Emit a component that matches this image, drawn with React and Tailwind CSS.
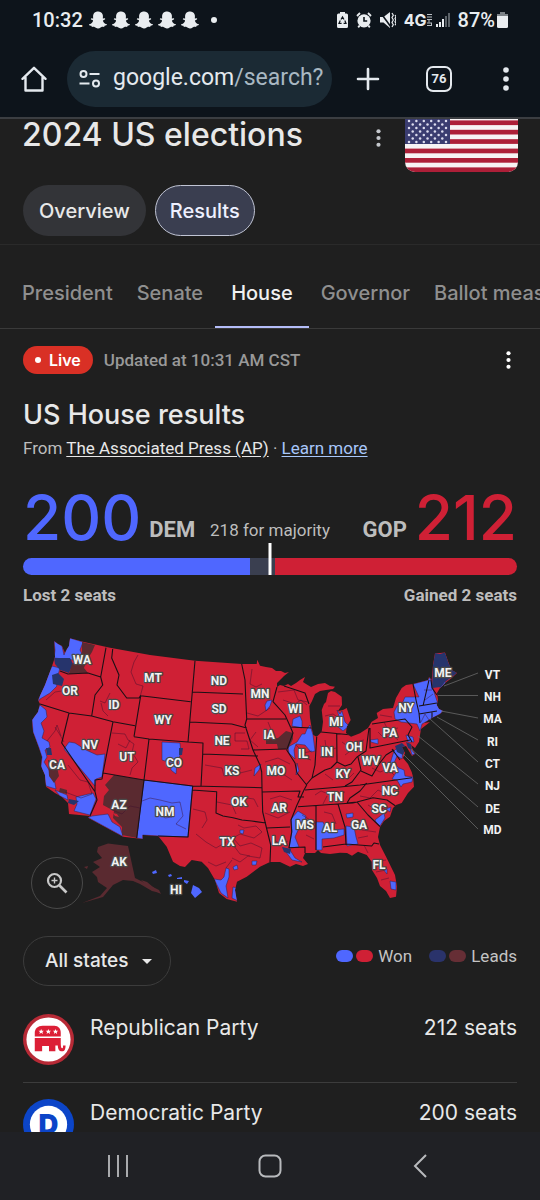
import React from "react";
import { FaSnapchatGhost } from "react-icons/fa";

const RED = "#cf2035";
const BLUE = "#4f67ff";
const NAVY = "#26346c";
const MAROON = "#5a2a30";

function Kebab({ className }) {
  return (
    <svg viewBox="0 0 6 24" className={className} fill="currentColor" aria-hidden="true">
      <circle cx="3" cy="3" r="2.8" />
      <circle cx="3" cy="12" r="2.8" />
      <circle cx="3" cy="21" r="2.8" />
    </svg>
  );
}

function StatusBar() {
  return (
    <div className="flex h-10 items-center justify-between pl-8 pr-8 text-[#e9edf0]">
      <div className="flex items-center gap-[6px]">
        <span className="font-['Roboto',sans-serif] text-xl font-medium">10:32</span>
        <div className="flex items-center gap-[5px]">
          {[0, 1, 2, 3, 4].map((i) => (
            <FaSnapchatGhost key={i} className="size-[18px]" />
          ))}
        </div>
        <span className="ml-[6px] size-[6px] rounded-full bg-[#e9edf0]" />
      </div>
      <div className="flex items-center gap-2">
        <svg viewBox="0 0 11 16" className="h-4 w-[11px]" aria-hidden="true">
          <path d="M3 0h5v1.600h1.500A1.500 1.500 0 0 1 11 3.100v11.400A1.500 1.500 0 0 1 9.500 16h-8A1.500 1.500 0 0 1 0 14.500V3.100A1.500 1.500 0 0 1 1.500 1.600H3z" fill="#e9edf0" />
          <path d="M4 7.500l1.500-2.600L7 7.500M7.800 8.600l1.200 2.700H6.600M4.600 11.300H2L3.300 8.600" fill="none" stroke="#0d141b" strokeWidth="1.200" />
        </svg>
        <svg viewBox="0 0 16 16" className="size-4" aria-hidden="true">
          <circle cx="8" cy="8.800" r="6.600" fill="#e9edf0" />
          <path d="M1 4l3-3M15 4l-3-3M3.600 13.600L2.200 15.400M12.400 13.600l1.400 1.800" stroke="#e9edf0" strokeWidth="1.800" />
          <path d="M8 5v4h3.200" fill="none" stroke="#0d141b" strokeWidth="1.600" />
        </svg>
        <svg viewBox="0 0 16 16" className="size-4" aria-hidden="true">
          <path d="M0 5h3.500L10 0v16l-6.500-5.500H0z" fill="#e9edf0" />
          <path d="M0 0L11 15" stroke="#0d141b" strokeWidth="1.600" />
          <path d="M12 1l1.300 2.300L12 5.600l1.300 2.400L12 10.400l1.300 2.300L12 15M15 3l1 1.700-1 1.700 1 1.700-1 1.700 1 1.700-1 1.700" fill="none" stroke="#e9edf0" strokeWidth="1.200" />
        </svg>
        <div className="flex items-center">
          <span className="font-['Inter',sans-serif] text-base leading-4 font-bold">4G</span>
          <svg viewBox="0 0 5 12" className="h-3 w-[5px]" stroke="#b9bfc4" strokeWidth="1" fill="none" aria-hidden="true">
            <path d="M0 .5h5M0 3h5M0 5.500h5M2 5.500v3M0 9h5M0 11.500h5M4.500 9v2.500" />
          </svg>
        </div>
        <svg viewBox="0 0 14 14" className="-ml-1 size-[14px]" aria-hidden="true">
          <path d="M0 11h2v3H0zM3 9h2v5H3zM6 6h2v8H6z" fill="#e9edf0" />
          <path d="M9 3h2v11H9zM12 0h2v14h-2z" fill="#5c6369" />
        </svg>
        <div className="flex items-center gap-[2px]">
          <span className="font-['Roboto',sans-serif] text-xl font-medium">87%</span>
          <svg viewBox="0 0 11 16" className="h-4 w-[11px]" aria-hidden="true">
            <path d="M3 0h5v2h3v3H0V2h3z" fill="#7c8287" />
            <path d="M0 4h11v10.500a1.500 1.500 0 0 1-1.500 1.500h-8A1.500 1.500 0 0 1 0 14.500z" fill="#e9edf0" />
          </svg>
        </div>
      </div>
    </div>
  );
}

function BrowserBar() {
  return (
    <div className="flex h-[77px] items-center pl-[21px] pr-[31px] text-[#e4e9ee]">
      <button type="button" aria-label="Home">
        <svg viewBox="0 0 26 26" className="size-[26px]" fill="none" stroke="currentColor" strokeWidth="2.400" strokeLinejoin="round" strokeLinecap="round">
          <path d="M4.500 11.500v13h17v-13M1.500 12.800L13 1.800l11.500 11" />
        </svg>
      </button>
      <button type="button" aria-label="Address" className="ml-5 flex h-14 flex-1 items-center gap-3 rounded-full bg-[#1b2a34] pl-3 text-left font-['Roboto',sans-serif] text-[23px]">
        <svg viewBox="0 0 22 18" className="h-[18px] w-[22px]" fill="none" stroke="currentColor" strokeWidth="2" aria-hidden="true">
          <circle cx="4.500" cy="4" r="3" />
          <path d="M10.500 4h10M.5 13.500h10" />
          <circle cx="17" cy="13.500" r="3" />
        </svg>
        <span>
          google.com<span className="text-[#a9b8c2]">/search?</span>
        </span>
      </button>
      <button type="button" aria-label="New tab" className="ml-6">
        <svg viewBox="0 0 24 24" className="size-6" stroke="currentColor" strokeWidth="2.600" strokeLinecap="round">
          <path d="M12 2v20M2 12h20" />
        </svg>
      </button>
      <button type="button" aria-label="76 open tabs" className="ml-[46px] flex size-[26px] items-center justify-center rounded-[7px] border-2 border-[#e4e9ee] font-['Roboto',sans-serif] text-[13px] font-bold">
        76
      </button>
      <button type="button" aria-label="Browser menu" className="ml-[51px]">
        <Kebab className="h-6 w-[6px]" />
      </button>
    </div>
  );
}

function Flag() {
  const stars = [];
  for (let r = 0; r < 9; r++) {
    for (let c = 0; c < (r % 2 ? 5 : 6); c++) {
      stars.push([4 + c * 7.400 + (r % 2 ? 3.700 : 0), 3 + r * 3.500]);
    }
  }
  return (
    <svg viewBox="0 0 113 61" preserveAspectRatio="none" className="-mt-2 h-[61px] w-[113px] rounded-b-[10px]" role="img" aria-label="Flag of the United States">
      <rect width="113" height="61" fill="#f7f3f4" />
      {[0, 1, 2, 3, 4, 5, 6].map((i) => (
        <rect key={i} y={i * 9.400} width="113" height="4.700" fill="#ad1f38" />
      ))}
      <rect width="45" height="33" fill="#3a3c70" />
      {stars.map(([x, y], i) => (
        <circle key={i} cx={x} cy={y} r="1.250" fill="#dcdcee" />
      ))}
    </svg>
  );
}

const LAND =
  "M54.300 641L58 644 62 646 65 653 67 649 69 646 70 638.300 84 642 110 647.700 150 655 195 660.700 242 664 256.700 664 257.300 659.700 260 665.700 266 667 272 668 276 671 281 671 285 673 289 672 284 676 277 683 277 687 280 685 284 686 288 684 291 686 296 683 300 680 305 677 303 682 306 684 311 687 318 684 325 683 330 686 335 686.700 333 689 326 690 320 691 315 694 311.700 701.700 309.300 706 310 718 311.700 728 313.300 735 316.700 736.700 321.700 731.700 323 721.700 321.700 710 324 704 326 702 328 693 331 691 335 692 341.700 696.700 342 705 338 711 343 710 346.700 708 350.700 720 346.700 726.700 346 733 351 736.700 360 733.300 368 728 371.700 721.700 378 718 376.700 713 383 709 393 708 396 698 401.700 688 406 685 413 684 428 680 429 677 431.700 680 433 665 435 653 440 653 445 652.500 449 664 451.700 670 457 673 451.700 678 445 683 440 688 437 693 438 700 436.700 705 439 709 443 711 440 714 431.700 718 424 723 430 722 421 729 420 735 419 741.700 415 748 411 745 413 750 415 754 412 756 406 746 402 747 405 753 403 758 408 764 411.700 772 413 776.700 414 786.700 408 793 401.700 803 396 805 393 808 390 816.700 384 821 380 827 378 837 380 845 386.700 858 395 875 397 886.700 396 896.700 390 898 386 891 380 886 377 878 372 870 371.700 861.700 366.700 855 358 851.700 352 855.700 347 853 340 852.700 330 854 321 853 318 850 315 853 305 853 303 858 308 864 303 866 296 864 290 866.700 280 862 270 862 260 866.700 246.700 876.700 237 881.700 235 890 237 901.700 226.700 899 219 893 215 880 208 868 201.700 861.700 191.700 860 185 867 180 866 173 861.700 166.700 846.700 158 835.700 142.700 835 142.700 839 123 836.700 88 817.700 90 816 69 814 68 803 62 797 55 793 46 786.700 45 775 41 766 42 757 39 748 33 731.700 32 720 38 712 40 704 38 700 45 685 51.700 667 55 657z";

const BLUES = [
  "M54 641L62 646 64 655 70 638 83 642 80 650 83 656 73 660 54 658 55 650z",
  "M52 666L60 668 58 675 54 680 57 686 50 693 40 699 38 702 41 689z",
  "M40 705L46 710 47 717 41 723 44 731 42 738 49 742 50 747 45 750 47 757 44 762 49 770 54 778 56 789 46 786 41 766 42 757 39 748 33 732 32 720z",
  "M69 742L75 743 86 750 97 755 105 754 102 777 96 779 95 786 64 749z",
  "M76 797L93 793 96 799 90 815 74 811 77 804zM55 790L67 795 68 800 60 796z",
  "M92 816L108 814 112 822 120 827 123 836.500 88 817.500z",
  "M144 780L192.700 786 188 837 158 836 142.700 835 142.700 839 136.700 838z",
  "M162 742L180 743 181 753 177 762 176 774 171 770 171 763 162 760z",
  "M272 700L270 706 266 711 265 705 267 701z",
  "M293 719L300 716 302 721 302 728 292 726z",
  "M310 725l3 10 2 16-4 1-6-7-9-1-2 6 1 9-6-6-1-6 9-5 5-8 3 0 2-5z",
  "M261 764L259 770 254 776 255 768zM297 763l2 8-3 4z",
  "M337 710L340 714 342 711 345 722 349 726 343 731 336 725 340 719z",
  "M413 684L428 680 430 677 434 692 438 704 443 711 440 714 422 724 420 731 417 724 401 722 395 719 394 712 397 706 402 704 405 697 419 697z",
  "M440 688L444 681 447 684 442 690zM370 740l8-1 0 5-7-2z",
  "M406 735L413 737 414 742 408 742zM394 751l6-6 3 5-1 9-5-3-3 7 6 6-3 4-5-5-2-4z",
  "M399 768L404 770 405 776 413 777 412 782 403 784 401 787 397 780 392 779zM410 748l5 6-3 1z",
  "M375 820L384 813 385 818 380 826 376 822zM386 809l5-2-1 5z",
  "M298 811L306 816 304 824 299 828 295 837 299 847 289 848 292 831 291 819z",
  "M316 822L323 822 328 832 333 830 344 829 344 835 334 838 322 839 322 850 316 850z",
  "M346 826L354 827 356 837 358 844 347 846zM346 814l7-1 0 4-6 1z",
  "M283 848L290 850 295 858 302 862 292 860z",
  "M226 868L229 869 229 877 226 886 228 898 221 893 214 879 221 880 224 877zM233 887l4 1 1 13-6-3z",
  "M390 881L396 882 396 890 391 889zM383 869l4 0 0 5z",
  "M233 867l4-2 1 4-4 1zM240 830l4 0-1 4-3-1zM252 861l5 0-1 4-4 0z",
];

const NAVIES = [
  "M54 658L70 658 73 664 69 673 60 670 55 664z",
  "M52 675L58 673 64 679 62 686 53 684z",
  "M433 665L435 653 440 654 445 652.500 449 664 457 673 445 682 441 687 432 688z",
  "M46 748L51 748 52 755 47 755zM69 799l10 2-5 4-6-2zM282 847l9 2-1 5-6-2zM179 748l4 0-1 7-3 0z",
  "M395 746l7-3 4 4-3 8-6-3zM406 742l5 2 1 6-4-2z",
];

const MAROONS = [
  "M82 642L95 645 92 652 87 660 84 668 88 673 69 674 72 664 78 660 82 652z",
  "M48 760L56 762 59 776 54 783 49 776zM60 788l7 2 0 4-8-2z",
  "M114 775L144 780 137 838 122 835 122 827 113 818 114 811 103 805 104 796 109 790 105 785z",
  "M266 740L278 738 286 731 293 733 293 739 288 749 278 749 277 744 266 744z",
];

const STATE_LINES =
  "M60 671L68 674 88 673 100.700 677M106 647.700L100.700 677 102.700 685 95 695 91.700 716M40 704L69 713 91.700 716 113 721.700 135 725.700M112.700 649L111.700 658 119 675 117 685 126.700 698 139 698 140.700 695.700 134 736.700M140.700 695.700L190.700 701.700M195 660.700L188 742M134 736.700L149 739 188 742 203 743 202.700 754 258 756M113 721.700L103 773M149 739L144 780M69 713L61.700 743 95 791.700 97 800 90 816M103 773L102 779 95 780 95 791.700M103 773L144 780 192.700 786 261.700 787.700M144 780L136.700 838M192.700 786L188 837 158 836M192 790L216.700 791.700 216 813 223 816 233 817.700 242 820 251.700 821 266 823M192 692L243 694M241.700 664L245 680 245.700 697 246.700 719 245 725 253 750 260 765 261.700 772 262 788 262.700 812 266.500 828 270.700 845 270 862M190 722L231.700 724 246.700 728M202.700 754L201 786M246.700 719L286 719M277 687L273 701.700 285 715 290 726 293 733 286.700 750 295 763 297 773 306.700 785 304 790 297 805 291 820 291.700 832 289 847.700 305 847 305 853M253 750L286 749M290 727L312 728M284 686L305 693 309 704M316.700 737L315 765 312 778M321 732L352 735M336.700 733L337 762M306 785L312 778 325 770 331 768 337 762 345 766 351 764 357 757 366 751 369 728M262 792L300 791 298 797 304 797M305 790L340 787 360 785 412 777.700M266.500 828L290 827M298 806.700L338 804 353 803M316 805.700V850M338 804L345 827 346 845M323 847L346 844 371.700 846 374 843 379 844M353 803L357 802 368 815 380 826.700M347 803L357 802 373 797.700 387 800 397 807M366.700 783L360 791 350 798 347 803M358 757L361 770 352 782 345 786M361 771L372 776 379 764 386 755 394 750M370 728L370 748 410 740M372 724L405 719 412 727 408 735 412 742M413 684L416 700 419 713 420 723M429 680L423 706M419 706L437 703M419 714L437 711M432 712L432 718M431 680L432 688 437 695M392 749L400 760";

const DISTRICT_LINES =
  "M138 655L134 662 131 672 136 684 143 686 140 697M100 701L105 703 110 693M101 703L103 711 108 716M46 700L55 692 68 690M55 727L60 735 64 742M47 741L55 731 57 725 61 736M112 733L125 734 128 740 134 744 132 752 138 762 132 768 130 775M118 744l8 4 4-8M68 765L80 780 88 782 92 794 81 798 65 792M252 669L250 684 256 687 262 684M247 713L258 716 270 708M278 692L294 690 298 700 308 702M283 700l12 4 6-4 6 5M256 732L250 740 258 747M268 722L272 732 266 737M245 733h-10v8h12l2 8h-8M205 765L222 768 224 776 240 773 252 770M265 762L278 758 290 764M266 774L280 772 292 780M142 801L150 798 160 800 172 803 180 802 183 816 176 824 186 829M157 812L165 818 172 817M193 809L205 812 207 820 202 828M196 834L206 842 216 848 226 842M217 802L232 805 236 814M240 797l14 2 4 8M238 825L244 828 256 826 262 832 254 838 240 834 233 838 240 846 251 843 262 848 260 858 248 856 240 862 232 858M234 846l6 8 10 2M232 860l-6 8M208 862l8 4 10-4M270 799L280 796 292 800M265 813L278 818 290 812M272 838l8 6 8-3M302 815l10 6M306 835l8 4M324 812l8 2 4 10M350 822l12-2 6 8M358 838l10-2M362 830l14 2M315 795l6-4 10 4 14-3M323 804l4-8M340 775l8 4 6-6M325 774l8 6M320 746l10 4 6-2M320 757l14 0M325 740l2 14M342 742l8 6 10-3M345 755l8-6M364 740l-10 2M378 732l6 6 8-3 6 5M384 722l4 8 10-2M380 715l12 2M398 711l8 2 6-2M425 700l8-6M424 690l8 0M421 722l4-8 4 6M360 796l10 2 8-8 10 5 6-9M372 768l8 4 8-3 6 6M368 758l8 5M368 805l10 6 8-4M374 862l12-2M376 872l10-2M381 880l8-2M325 716l8-2 6 4M328 706l12 0M364 845l4 8M296 745l8 8 8-2M299 756l12 4M112 810l10 4 8-8 10 2";

const ISLANDS =
  "M152 872l4-2 1 3-4 1zM168 875l3-1 1 2-3 1zM177 878l5-1 0 2-5 0zM184 880l5 1-2 3-3-2zM193 885L199 888 202 892 195 898 191 893z";

const ALASKA =
  "M98 847L108 843.500 128 846 135 878 143 882 153 887 160 893 152 891 140 884 133 881 123 880 113 885 103 897 82 903 100 896 107 888 98 882 97 877 92 872 100 867 93 862 102 858 97 852z";

const LABELS = [
  ["WA", 82, 660], ["OR", 70, 691], ["ID", 114, 705], ["MT", 153, 678], ["WY", 163, 719.500],
  ["NV", 90, 745], ["UT", 127, 756.500], ["CO", 174, 763], ["CA", 57, 765], ["AZ", 119, 804.500],
  ["NM", 165, 812], ["AK", 119, 861.500], ["HI", 176, 889.500], ["ND", 219, 680.500], ["SD", 219, 709],
  ["NE", 222, 740.500], ["KS", 232, 770.500], ["OK", 239, 802], ["TX", 227, 842], ["MN", 260, 693.500],
  ["IA", 269, 735], ["WI", 295, 709], ["MI", 336, 721.500], ["IL", 303, 753.500], ["IN", 327, 752],
  ["OH", 354, 747], ["MO", 276, 770.500], ["AR", 279, 807.500], ["LA", 279, 841], ["MS", 305, 825],
  ["AL", 330, 828], ["TN", 335, 796.500], ["KY", 343, 773.500], ["WV", 371, 761], ["VA", 390, 768],
  ["NC", 390, 790.500], ["SC", 379, 809], ["GA", 359, 825], ["FL", 379, 864.500], ["PA", 390, 732.500],
  ["NY", 406, 708], ["ME", 443, 672.500],
];

const CALLOUTS = [
  ["VT", 675, 444, 686, 673], ["NH", 697, 438, 695.500, 695.500], ["MA", 719, 441, 711, 718], ["RI", 741.500, 437, 717, 740],
  ["CT", 763.500, 430, 719, 762], ["NJ", 786, 418, 736, 784], ["DE", 808.500, 411, 749, 807], ["MD", 830, 403, 754, 829],
];

function HouseMap() {
  return (
    <svg viewBox="0 620 540 300" className="block w-full" role="img" aria-label="US House results by district">
      <defs>
        <clipPath id="land">
          <path d={LAND} />
        </clipPath>
      </defs>
      <path d={LAND} fill={RED} />
      <g clipPath="url(#land)">
        <g fill={BLUE} stroke="#2b2550" strokeWidth="0.500">
          {BLUES.map((d) => <path key={d} d={d} />)}
        </g>
        <g fill={NAVY}>{NAVIES.map((d) => <path key={d} d={d} />)}</g>
        <g fill={MAROON}>{MAROONS.map((d) => <path key={d} d={d} />)}</g>
        <path d="M113 813l4 1 2 3-4-1zM124 878l2 8" fill={RED} />
        <path d={DISTRICT_LINES} fill="none" stroke="#3d1030" strokeOpacity="0.750" strokeWidth="0.600" strokeLinejoin="round" />
        <path d={STATE_LINES} fill="none" stroke="#1b1016" strokeWidth="1.100" strokeLinejoin="round" />
      </g>
      <path d={ALASKA} fill={MAROON} />
      <path d="M141 880l6 2 6 5 6 3 2 4-6-3-8-5zM84 867l4-1-1 3z" fill={MAROON} />
      <path d={ISLANDS} fill={BLUE} />
      <g stroke="#686868" strokeWidth="0.800">
        {CALLOUTS.map(([name, , x1, y1, y2]) => (
          <line key={name} x1={x1} y1={y1} x2="478" y2={y2} />
        ))}
      </g>
      <g className="font-['Roboto',sans-serif] text-[12px] font-bold" textAnchor="middle" fill="#f2f2f2">
        <g stroke="#4a4a4a" strokeWidth="2.400" strokeLinejoin="round" paintOrder="stroke">
          {LABELS.map(([name, x, y]) => (
            <text key={name} x={x} y={y + 4.300}>{name}</text>
          ))}
        </g>
        {CALLOUTS.map(([name, y]) => (
          <text key={name} x="492.500" y={y + 4.300}>{name}</text>
        ))}
      </g>
    </svg>
  );
}

function DemocraticLogo() {
  return (
    <svg viewBox="0 0 52 52" className="size-[51px] shrink-0" role="img" aria-label="Democratic Party logo">
      <circle cx="26" cy="26" r="26" fill="#0c45c8" />
      <circle cx="26" cy="26" r="19" fill="#fff" />
      <text x="26" y="36" textAnchor="middle" fill="#0c45c8" className="font-['Inter',sans-serif] text-[28px] font-black">D</text>
    </svg>
  );
}

function RepublicanLogo() {
  return (
    <svg viewBox="0 0 52 52" className="size-[51px] shrink-0" role="img" aria-label="Republican Party logo">
      <circle cx="26" cy="26" r="26" fill="#b72a36" />
      <circle cx="26" cy="26" r="22.500" fill="#fff" />
      <g fill="#dc1f36">
        <path d="M12 23v-4c0-4 3-7 8-7h12c4 0 6.500 3 6.500 7v4z" />
        <path d="M12 24.500h26.500v5c0 3 .3 5.500 1.500 5.500 1 0 .8-2 .8-3h2.600c0 3.500-.8 6-3.600 6-3 0-4.300-2.500-4.300-6h-2.500v6h-6.500v-5.500h-7V38H12z" />
      </g>
      <path
        d="M18.500 15.200l.8 1.800 2 .1-1.500 1.300.5 1.900-1.800-1.100-1.700 1.100.5-1.900-1.500-1.300 2-.1zM25.800 15.200l.8 1.800 2 .1-1.500 1.300.5 1.900-1.800-1.100-1.700 1.100.5-1.900-1.500-1.300 2-.1zM33.100 15.200l.8 1.800 2 .1-1.500 1.300.5 1.900-1.800-1.100-1.700 1.100.5-1.900-1.500-1.300 2-.1z"
        fill="#fff"
      />
    </svg>
  );
}

const TABS = ["President", "Senate", "House", "Governor", "Ballot measures"];

export default function App() {
  return (
    <div className="flex h-screen flex-col overflow-hidden bg-[#1f1f1f] font-['Inter',sans-serif] text-[#e8e8e8]">
      <header className="shrink-0 border-b-2 border-[#3b3e42] bg-[#0d141b]">
        <StatusBar />
        <BrowserBar />
      </header>

      <main className="min-h-0 flex-1 overflow-hidden">
        <section className="border-b border-[#2a2a2a] pb-2">
          <div className="flex h-[66px] items-start pl-[22px] pr-[22px]">
            <h1 className="flex-1 text-[32px] leading-8 font-medium">2024 US elections</h1>
            <button type="button" aria-label="More options" className="mt-[10px] mr-6 text-[#c4c7cc]">
              <Kebab className="h-[18px] w-[5px]" />
            </button>
            <Flag />
          </div>
          <nav className="flex gap-[9px] px-[23px] text-xl font-medium">
            <button type="button" className="h-[51px] rounded-full bg-[#333438] px-4 pt-px">Overview</button>
            <button type="button" className="h-[51px] rounded-full border border-[#c0c4d4] bg-[#3a3e50] px-[14px] pt-px text-[#eef0ff]">Results</button>
          </nav>
        </section>

        <nav className="flex h-[84px] overflow-hidden border-b border-[#3a3a3a] pl-[10px] text-xl font-medium">
          {TABS.map((t) => (
            <button
              key={t}
              type="button"
              className={
                t === "House"
                  ? "shrink-0 border-b-2 border-[#b4bdf8] px-4 pt-[14px] whitespace-nowrap text-[#f0f0f0]"
                  : "shrink-0 px-3 pt-[14px] pb-[2px] whitespace-nowrap text-[#8f8f8f]"
              }
            >
              {t}
            </button>
          ))}
        </nav>

        <section className="pt-[17px]">
          <div className="flex items-center pl-[23px] pr-[29px]">
            <span className="flex h-7 items-center gap-2 rounded-full bg-[#d93025] px-3 text-base font-semibold text-white">
              <span className="size-[6px] rounded-full bg-white" />
              Live
            </span>
            <span className="ml-[11px] flex-1 font-['Roboto',sans-serif] text-[17px] leading-6 font-medium text-[#999]">Updated at 10:31 AM CST</span>
            <button type="button" aria-label="Results options" className="text-white">
              <Kebab className="h-[18px] w-[5px]" />
            </button>
          </div>

          <div className="px-[23px]">
            <h2 className="mt-[25px] text-[27px] leading-8 font-medium">US House results</h2>
            <p className="mt-[5px] font-['Roboto',sans-serif] text-[17px] leading-6 text-[#bdbdbd]">
              From{" "}
              <a href="#ap" className="text-[#e8e8e8] underline underline-offset-2">The Associated Press (AP)</a>
              {" · "}
              <a href="#learn" className="text-[#a8c7fa] underline underline-offset-2">Learn more</a>
            </p>

            <div className="mt-[22px] grid grid-cols-[1fr_auto_1fr] items-end font-['Roboto',sans-serif] text-[#bdbdbd]">
              <div className="flex items-end gap-2">
                <span className="font-['Inter',sans-serif] text-[62px] leading-[72px] font-medium text-[#4f67ff]">200</span>
                <span className="pb-3 text-[22px] leading-6 font-bold">DEM</span>
              </div>
              <span className="pb-3 text-[17px] leading-6">218 for majority</span>
              <div className="flex items-end justify-end gap-2">
                <span className="pb-3 text-[22px] leading-6 font-bold">GOP</span>
                <span className="font-['Inter',sans-serif] text-[62px] leading-[72px] font-medium text-[#cf2035]">212</span>
              </div>
            </div>

            <div className="relative mt-1 flex h-[17px]">
              <div className="w-[46%] rounded-l-full bg-[#4f67ff]" />
              <div className="flex-1 bg-[#3a3f50]" />
              <div className="w-[49%] rounded-r-full bg-[#cf2035]" />
              <div className="absolute bottom-0 left-1/2 h-8 w-[3px] -translate-x-1/2 bg-white" />
            </div>
            <div className="mt-2 flex justify-between font-['Roboto',sans-serif] text-[17px] leading-6 font-bold text-[#bdbdbd]">
              <span>Lost 2 seats</span>
              <span>Gained 2 seats</span>
            </div>
          </div>

          <div className="relative mt-[13px]">
            <HouseMap />
            <button type="button" aria-label="Zoom in" className="absolute bottom-[11px] left-[31px] flex size-[52px] items-center justify-center rounded-full border border-[#4a4a4a] bg-[#1f1f1f] text-[#c8c8c8]">
              <svg viewBox="0 0 22 22" className="size-[22px]" fill="none" stroke="currentColor" aria-hidden="true">
                <circle cx="8.500" cy="8.500" r="6.500" strokeWidth="2.200" />
                <path d="M13.500 13.500l7 7" strokeWidth="2.600" />
                <path d="M8.500 5.500v6M5.500 8.500h6" strokeWidth="1.400" />
              </svg>
            </button>
          </div>

          <div className="flex items-start justify-between px-[23px] pt-4">
            <div className="relative">
              <select aria-label="State" className="h-[50px] w-[148px] appearance-none rounded-full border border-[#3c3c3c] bg-transparent pl-[21px] text-[19px] font-medium">
                <option>All states</option>
              </select>
              <svg viewBox="0 0 10 5" className="pointer-events-none absolute top-[23px] right-[19px] h-[5px] w-[10px]" fill="#e8e8e8" aria-hidden="true">
                <path d="M0 0h10L5 5z" />
              </svg>
            </div>
            <div className="flex items-center gap-[17px] pt-2 font-['Roboto',sans-serif] text-[17px] leading-6 text-[#c4c4c4]">
              <span className="flex items-center gap-[3px]">
                <span className="h-3 w-[17px] rounded-full bg-[#4f67ff]" />
                <span className="mr-[2px] h-3 w-[17px] rounded-full bg-[#cf2035]" />
                Won
              </span>
              <span className="flex items-center gap-[3px]">
                <span className="h-3 w-[17px] rounded-full bg-[#2a336b]" />
                <span className="mr-[2px] h-3 w-[17px] rounded-full bg-[#662e35]" />
                Leads
              </span>
            </div>
          </div>

          <ul className="mt-3 px-[23px] text-[21px]">
            <li className="flex h-[85px] items-start border-b border-[#3c3c3c] pt-4">
              <RepublicanLogo />
              <span className="ml-4 flex-1 leading-7">Republican Party</span>
              <span className="leading-7">212 seats</span>
            </li>
            <li className="flex h-[85px] items-start border-b border-[#3c3c3c] pt-4">
              <DemocraticLogo />
              <span className="ml-4 flex-1 leading-7">Democratic Party</span>
              <span className="leading-7">200 seats</span>
            </li>
          </ul>
        </section>
      </main>

      <footer className="flex h-[68px] shrink-0 items-center justify-between bg-[#202125] px-[107px] text-[#b8babd]">
        <button type="button" aria-label="Recent apps">
          <svg viewBox="0 0 22 22" className="size-[22px]" stroke="currentColor" strokeWidth="1.800">
            <path d="M2 0v22M11 0v22M20 0v22" />
          </svg>
        </button>
        <button type="button" aria-label="Home screen">
          <svg viewBox="0 0 24 24" className="size-6" fill="none" stroke="currentColor" strokeWidth="2">
            <rect x="1.500" y="1.500" width="21" height="21" rx="6" />
          </svg>
        </button>
        <button type="button" aria-label="Back">
          <svg viewBox="0 0 22 24" className="h-6 w-[22px]" fill="none" stroke="currentColor" strokeWidth="2">
            <path d="M15 1L4 12l11 11" />
          </svg>
        </button>
      </footer>
    </div>
  );
}
